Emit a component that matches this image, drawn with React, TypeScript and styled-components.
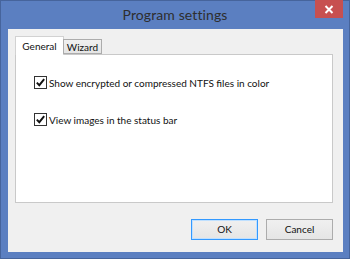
import React from 'react';
import styled, {createGlobalStyle} from 'styled-components';

const GlobalStyle = createGlobalStyle`
	html, body {
		margin: 0;
		padding: 0;
		background: #ffffff;
	}
	body {
		font-family: Lato, 'Noto Sans', sans-serif;
		font-size: 10px;
		color: #111111;
	}
`;

const Window = styled.div`
	width: 350px;
	height: 259px;
	box-sizing: border-box;
	background: #5b7fc1;
	border: 1px solid #46649c;
	display: flex;
	flex-direction: column;
`;

const TitleBar = styled.div`
	height: 28px;
	display: grid;
	grid-template-columns: 1fr auto 1fr;
	align-items: start;
	padding: 0 6px;
`;

const Title = styled.div`
	grid-column: 2;
	font-size: 14px;
	line-height: 14px;
	padding-top: 7px;
	color: #2e2e2e;
	letter-spacing: 0.1px;
`;

const CloseButton = styled.button`
	grid-column: 3;
	justify-self: end;
	width: 28px;
	height: 18px;
	margin-top: -1px;
	border: none;
	padding: 0;
	background: #c75050;
	display: flex;
	align-items: center;
	justify-content: center;
`;

const Client = styled.div`
	flex: 1;
	margin: 0 6px 6px 7px;
	background: #f0f0f0;
	padding: 7px 10px 0 7px;
	display: flex;
	flex-direction: column;
`;

const TabStrip = styled.div`
	display: flex;
	align-items: flex-end;
	height: 18px;
	position: relative;
	z-index: 1;
`;

const Tab = styled.div<{$active?: boolean}>`
	box-sizing: border-box;
	height: ${p => (p.$active ? '19px' : '15px')};
	padding: ${p => (p.$active ? '3px 0 0 0' : '1px 0 0 0')};
	text-align: center;
	border: 1px solid ${p => (p.$active ? '#d2d2d2' : '#acacac')};
	border-bottom: ${p => (p.$active ? 'none' : '1px solid #acacac')};
	background: ${p => (p.$active ? '#ffffff' : 'linear-gradient(#f0f0f0, #e5e5e5)')};
	line-height: 12px;
	color: #111111;
	margin-left: ${p => (p.$active ? '0' : '-1px')};
	margin-bottom: ${p => (p.$active ? '-1px' : '0')};
	width: ${p => (p.$active ? '49px' : '39px')};
	white-space: nowrap;
`;

const Panel = styled.div`
	height: 149px;
	box-sizing: border-box;
	background: #ffffff;
	border: 1px solid #c9c9c9;
	padding: 21px 0 0 18px;
	display: flex;
	flex-direction: column;
	gap: 24px;
`;

const Option = styled.label`
	display: flex;
	align-items: center;
	gap: 2px;
	height: 13px;
	white-space: nowrap;
	color: #111111;
`;

const Box = styled.span`
	width: 13px;
	height: 13px;
	box-sizing: border-box;
	border: 1px solid #333333;
	background: #ffffff;
	display: flex;
	align-items: center;
	justify-content: center;
	flex-shrink: 0;
`;

const Footer = styled.div`
	display: flex;
	justify-content: flex-end;
	gap: 8px;
	padding: 16px 0 0 0;
`;

const Button = styled.button<{$default?: boolean}>`
	width: 67px;
	height: 21px;
	box-sizing: border-box;
	border: 1px solid ${p => (p.$default ? '#3399ff' : '#acacac')};
	box-shadow: ${p => (p.$default ? 'inset 0 0 0 1px #bfe0ff' : 'none')};
	background: linear-gradient(#f0f0f0, #e5e5e5);
	font-family: Lato, 'Noto Sans', sans-serif;
	font-size: 10px;
	color: #111111;
	padding: 0;
	line-height: 17px;
`;

const Check = () => (
	<svg width='9' height='9' viewBox='0 0 9 9'>
		<path d='M0.8 4.6 L3.3 7.2 L8.2 1.2' fill='none' stroke='#111' strokeWidth='1.9' />
	</svg>
);

const options = [
	'Show encrypted or compressed NTFS files in color',
	'View images in the status bar',
];

const App = () => (
	<>
		<GlobalStyle />
		<Window>
			<TitleBar>
				<Title>Program settings</Title>
				<CloseButton aria-label='Close'>
					<svg width='10' height='9' viewBox='0 0 10 9'>
						<path d='M1.5 1 L8.5 8 M8.5 1 L1.5 8' stroke='#ffffff' strokeWidth='2' />
					</svg>
				</CloseButton>
			</TitleBar>
			<Client>
				<TabStrip>
					<Tab $active>General</Tab>
					<Tab>Wizard</Tab>
				</TabStrip>
				<Panel>
					{options.map(text => (
						<Option key={text}>
							<Box><Check /></Box>
							{text}
						</Option>
					))}
				</Panel>
				<Footer>
					<Button $default>OK</Button>
					<Button>Cancel</Button>
				</Footer>
			</Client>
		</Window>
	</>
);

export default App;
